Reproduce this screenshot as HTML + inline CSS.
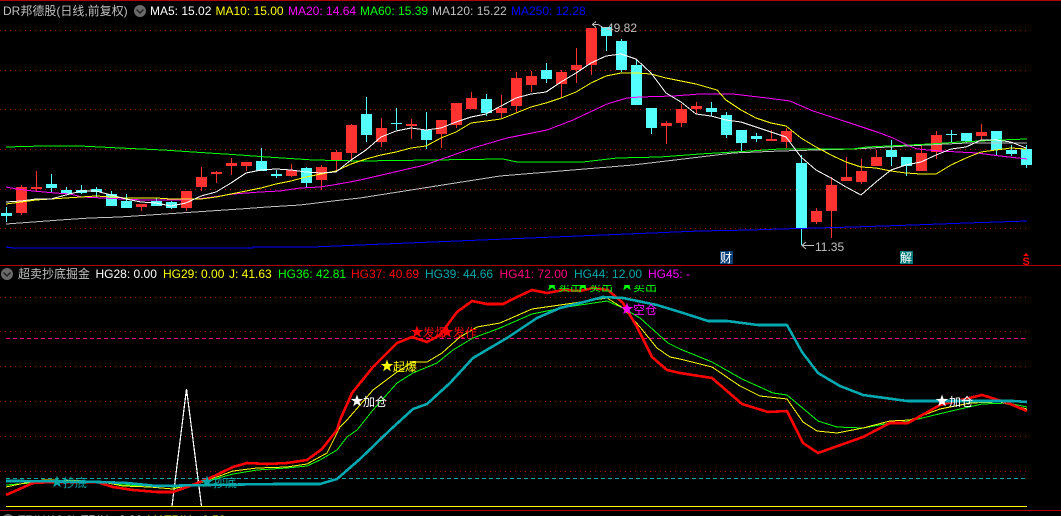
<!DOCTYPE html>
<html>
<head>
<meta charset="utf-8">
<style>
html,body{margin:0;padding:0;background:#000;width:1061px;height:516px;overflow:hidden}
svg{display:block}
text{font-family:"Liberation Sans","WenQuanYi Zen Hei","Noto Sans CJK SC",sans-serif;font-size:12px}
.l{fill:none;shape-rendering:crispEdges;stroke-width:1}
.t{fill:none;stroke-width:2.6;stroke-linejoin:round;shape-rendering:crispEdges}
</style>
</head>
<body>
<svg width="1061" height="516" viewBox="0 0 1061 516" xmlns="http://www.w3.org/2000/svg">
<defs>
<clipPath id="c"><rect x="0" y="285" width="1061" height="30"/></clipPath>
<path id="s" d="M0-6.500L1.530-2.100 6.180-2.010 2.470 .8 3.820 5.260 0 2.600-3.820 5.260-2.470 .8-6.180-2.010-1.530-2.100Z"/>
</defs>
<rect width="1061" height="516" fill="#000"/>
<rect x="0" y="0" width="1061" height="1" fill="#b00000"/>
<rect x="0" y="265" width="1061" height="1" fill="#b00000"/>
<rect x="0" y="510" width="1061" height="1" fill="#b00000"/>

<!-- grid -->
<g stroke="#a00000" stroke-width="1" stroke-dasharray="1 4" shape-rendering="crispEdges">
<path d="M0 30.500H1030M0 70.500H1030M0 109.500H1030M0 149.500H1030M0 189.500H1030M0 228.500H1030"/>
<path d="M0 297.500H1030M0 331.500H1030M0 366.500H1030M0 401.500H1030M0 436.500H1030M0 471.500H1030"/>
</g>
<path d="M6 338.500H1027" stroke="#ff0080" stroke-dasharray="4 3" shape-rendering="crispEdges"/>
<path d="M6 478.500H1027" stroke="#00a8a8" stroke-dasharray="4 3" shape-rendering="crispEdges"/>
<rect x="6" y="506" width="1021" height="1" fill="#ffff00"/>

<!-- candles -->
<g fill="none" shape-rendering="crispEdges">
<path stroke="#54ffff" d="M6.500 207V222M51.500 174V192M66.500 187V194M81.500 185V194M96.500 187V197M111.500 191V206M126.500 194V208M156.500 198V206M171.500 201V209M261.500 148V171M276.500 170V178M306.500 167V187M366.500 97V142M396.500 108V130M426.500 112V149M486.500 94V116M546.500 63V83M606.500 27V51M621.500 39V72M636.500 59V105M651.500 108V134M711.500 102V116M726.500 112V138M741.500 130V153M756.500 133V142M801.500 155V245M891.500 140V166M906.500 157V176M951.500 130V142M966.500 133V143M996.500 131V155M1011.500 145V156M1026.500 145V168"/>
<path stroke="#54ffff" stroke-width="11" d="M6.500 213V216M51.500 184V188M66.500 190V194M81.500 190V193M96.500 189V192M111.500 194V206M126.500 201V208M156.500 201V206M171.500 202V208M261.500 161V171M276.500 174V176M306.500 168V183M366.500 114V135M396.500 123V124M426.500 130V140M486.500 99V113M546.500 70V79M606.500 27V36M621.500 41V70M636.500 65V105M651.500 108V128M711.500 108V112M726.500 115V135M741.500 130V143M756.500 136V139M801.500 163V228M891.500 150V157M906.500 157V166M951.500 134V135M966.500 133V141M996.500 131V150M1011.500 150V154M1026.500 149V165"/>
<path stroke="#ff3232" d="M21.500 185V215M36.500 171V191M141.500 204V211M186.500 191V211M201.500 167V191M216.500 171V183M231.500 158V175M246.500 162V171M291.500 164V177M321.500 165V190M336.500 150V172M351.500 124V162M381.500 118V147M411.500 119V139M441.500 120V148M456.500 103V128M471.500 92V109M501.500 95V118M516.500 72V112M531.500 71V92M561.500 70V98M576.500 48V83M591.500 28V75M666.500 121V144M681.500 104V127M696.500 102V114M771.500 130V141M786.500 128V148M816.500 208V224M831.500 177V238M846.500 157V181M861.500 159V184M876.500 150V166M921.500 146V171M936.500 131V159M981.500 124V140"/>
<path stroke="#ff3232" stroke-width="11" d="M21.500 187V213M36.500 187V189M141.500 204V207M186.500 191V208M201.500 177V187M216.500 172V174M231.500 163V166M246.500 162V166M291.500 170V176M321.500 167V180M336.500 152V160M351.500 125V153M381.500 128V142M411.500 124V126M441.500 120V134M456.500 103V125M471.500 98V109M501.500 108V113M516.500 78V106M531.500 76V85M561.500 72V84M576.500 65V70M591.500 28V65M666.500 123V126M681.500 109V123M696.500 106V109M771.500 139V141M786.500 131V142M816.500 211V222M831.500 185V211M846.500 177V181M861.500 171V182M876.500 157V166M921.500 153V171M936.500 135V152M981.500 132V136"/>
</g>

<!-- MA lines -->
<polyline class="l" stroke="#0000ff" points="6,247 13,248 253,248 253,247 313,247 360,245 700,231 750,230 780,229 853,227 913,225 967,223 1027,221"/>
<polyline class="l" stroke="#c0c0c0" points="6,224 60,220 90,218 120,217 180,213 240,209 267,207 300,205 333,201 360,198 500,176 633,165 700,157 733,153 780,151 853,149 907,146 967,143 1027,143"/>
<polyline class="l" stroke="#00ff00" points="6,147 43,146 80,146 120,148 163,150 193,152 240,155 267,157 313,160 360,161 503,159 517,162 583,162 617,158 660,157 700,154 750,151 780,149 853,149 867,147 930,144 960,142 1000,140 1027,139"/>
<polyline class="l" stroke="#ff00ff" points="6,187 17,189 33,191 55,193 70,194 82,197 103,198 143,200 177,200 197,199 213,197 233,194 260,192 280,191 300,188 320,187 333,185 350,182 360,180 425,165 473,148 507,138 547,130 573,120 607,104 627,98 640,97 673,96 700,94 733,94 767,98 790,101 813,111 850,123 877,132 893,138 907,145 917,149 940,151 977,153 1000,156 1027,159"/>
<polyline class="l" stroke="#ffff00" points="6,204 21,202 36,200 51,199 66,198 81,197 96,196 111,197 126,198 141,198 156,198 171,199 186,199 201,199 216,197 231,194 246,191 261,188 276,184 291,181 306,177 321,174 336,171 351,164 366,159 381,155 396,152 411,148 426,146 441,138 456,132 471,123 486,121 501,119 516,113 531,107 546,103 561,98 576,92 591,83 606,76 621,73 636,73 651,74 666,78 681,81 696,84 717,90 726,100 741,110 756,118 771,123 786,126 801,138 816,147 831,155 846,162 861,167 876,168 891,171 906,173 921,174 936,174 951,165 966,158 981,152 996,150 1011,148 1026,149"/>
<polyline class="l" stroke="#ffffff" points="6,202 21,201 36,199 51,199 66,195 81,191 96,191 111,195 126,199 141,202 156,203 171,206 186,203 201,196 216,192 231,183 246,173 261,170 276,169 291,170 306,172 321,173 336,172 351,160 366,150 381,137 396,131 411,128 426,130 441,128 456,122 471,117 486,114 501,106 516,98 531,94 546,92 561,82 576,73 591,63 606,56 621,54 636,59 651,73 666,93 681,102 696,114 711,116 726,120 741,122 756,127 771,132 786,137 801,157 816,170 831,178 846,187 861,195 876,182 891,170 906,165 921,162 936,155 951,149 966,147 981,140 996,140 1011,142 1026,148"/>

<!-- price marks -->
<path d="M596 21.500L592.500 24.500L596 27.500M592.500 24.500H598L603 27.500H607" fill="none" stroke="#c0c0c0" shape-rendering="crispEdges"/>
<text x="607" y="32" fill="#c0c0c0">49.82</text>
<path d="M806 242L802 245.500L806 249M802 245.500H814" fill="none" stroke="#c0c0c0"/>
<text x="815" y="251" fill="#c0c0c0">11.35</text>
<rect x="720" y="251" width="13" height="13" fill="#0a3f78"/>
<text x="720" y="262" fill="#fff">财</text>
<rect x="900" y="251" width="13" height="13" fill="#067a7a"/>
<text x="900" y="262" fill="#fff">解</text>
<path d="M1026 253l3 3h-6z" fill="#ff0000"/>
<text x="1022.500" y="265" fill="#ff0000" style="font-weight:bold;font-size:11px">S</text>

<!-- sub chart lines -->
<polyline points="172,506 186.500,389 201.500,506" fill="none" stroke="#fff" stroke-width="1.200" shape-rendering="crispEdges"/>
<polyline class="l" stroke="#00ff00" points="6,485 43,482 97,481 123,485 153,486 177,487 200,483 233,474 257,470 287,468 307,466 320,460 337,450 347,437 357,430 373,410 397,383 413,373 437,363 453,350 473,338 500,328 532,314 567,307 607,301 623,308 640,318 668,343 680,349 712,362 742,379 773,393 787,395 818,421 837,427 863,428 890,423 910,421 947,412 982,404 1008,403 1027,407"/>
<polyline class="l" stroke="#ffff00" points="6,487 20,484 43,480 97,481 123,486 150,487 173,489 197,483 217,477 233,471 257,468 287,467 307,464 327,453 340,427 347,420 373,390 397,372 413,362 427,362 442,353 460,337 477,327 500,323 532,309 567,304 607,298 623,308 640,327 657,348 670,357 680,359 712,367 740,386 760,396 787,399 803,422 817,431 837,433 863,428 890,421 910,420 940,409 970,403 1000,402 1027,409"/>
<polyline class="t" stroke="#ff0000" points="6,495 33,483 53,482 97,482 113,487 133,490 157,492 173,492 190,486 210,478 233,467 247,463 267,464 287,463 307,460 322,449 337,430 340,420 352,393 373,367 397,343 412,337 427,342 440,335 457,312 472,301 487,304 503,304 517,297 532,290 547,293 563,290 580,291 593,288 608,290 623,303 637,327 652,357 667,370 680,373 712,378 742,404 768,412 787,411 803,443 818,453 863,437 890,423 908,423 940,405 982,395 1008,403 1027,411"/>
<polyline class="t" stroke="#00a8b0" points="6,481 20,481 100,482 127,483 157,486 207,485 277,484 320,484 337,479 360,459 390,430 413,409 427,404 450,383 473,358 507,338 537,318 560,308 580,303 603,297 623,298 657,305 680,312 708,321 727,321 758,325 787,325 802,352 818,373 840,386 863,395 907,401 1013,401 1027,402"/>

<!-- signal labels -->
<g clip-path="url(#c)" fill="#00ff00">
<use href="#s" x="552" y="285"/><text x="558" y="291">卖出</text>
<use href="#s" x="583" y="285"/><text x="589" y="291">卖出</text>
<use href="#s" x="627" y="285"/><text x="633" y="291">卖出</text>
</g>
<g fill="#00a8a8">
<use href="#s" x="57" y="482"/><text x="63" y="487">抄底</text>
<use href="#s" x="207" y="482"/><text x="213" y="487">抄底</text>
</g>
<g fill="#ffffff">
<use href="#s" x="357" y="401"/><text x="363" y="406">加仓</text>
<use href="#s" x="942" y="401"/><text x="949" y="406">加仓</text>
</g>
<g fill="#ffff00">
<use href="#s" x="387" y="366"/><text x="393" y="371">起爆</text>
</g>
<g fill="#ff0000">
<text x="423" y="337">发爆</text><use href="#s" x="417" y="332"/>
<text x="453" y="337">发作</text><use href="#s" x="447" y="332"/>
</g>
<g fill="#ff00ff">
<use href="#s" x="627" y="309"/><text x="633" y="314">空仓</text>
</g>

<!-- headers -->
<text x="3" y="15" fill="#c0c0c0">DR邦德股(日线,前复权)</text>
<circle cx="140" cy="11" r="6" fill="#6a6a6a"/>
<path d="M136.500 9.500L140 13L143.500 9.500" fill="none" stroke="#222" stroke-width="1.500"/>
<text x="150" y="15" fill="#ffffff">MA5: 15.02</text>
<text x="215.500" y="15" fill="#ffff00">MA10: 15.00</text>
<text x="288" y="15" fill="#ff00ff">MA20: 14.64</text>
<text x="360" y="15" fill="#00ff00">MA60: 15.39</text>
<text x="432" y="15" fill="#c0c0c0">MA120: 15.22</text>
<text x="511" y="15" fill="#0000ff">MA250: 12.28</text>

<circle cx="7" cy="274" r="6" fill="#6a6a6a"/>
<path d="M3.500 272.500L7 276L10.500 272.500" fill="none" stroke="#222" stroke-width="1.500"/>
<text x="18" y="278" fill="#c0c0c0">超卖抄底掘金</text>
<text x="95.500" y="278" fill="#ffffff">HG28: 0.00</text>
<text x="163" y="278" fill="#ffff00">HG29: 0.00</text>
<text x="229" y="278" fill="#ffff00">J: 41.63</text>
<text x="278" y="278" fill="#00ff00">HG36: 42.81</text>
<text x="351" y="278" fill="#ff0000">HG37: 40.69</text>
<text x="425" y="278" fill="#00a8a8">HG39: 44.66</text>
<text x="499.500" y="278" fill="#ff0080">HG41: 72.00</text>
<text x="574" y="278" fill="#00a8a8">HG44: 12.00</text>
<text x="648" y="278" fill="#ff00ff">HG45: -</text>

<circle cx="8" cy="520" r="6" fill="#6a6a6a"/>
<text x="18" y="524" fill="#c0c0c0">TRIX(12,9)</text>
<text x="81" y="524" fill="#ffffff">TRIX: -0.00</text>
<text x="147" y="524" fill="#ffff00">MATRIX: -0.50</text>
</svg>
</body>
</html>
